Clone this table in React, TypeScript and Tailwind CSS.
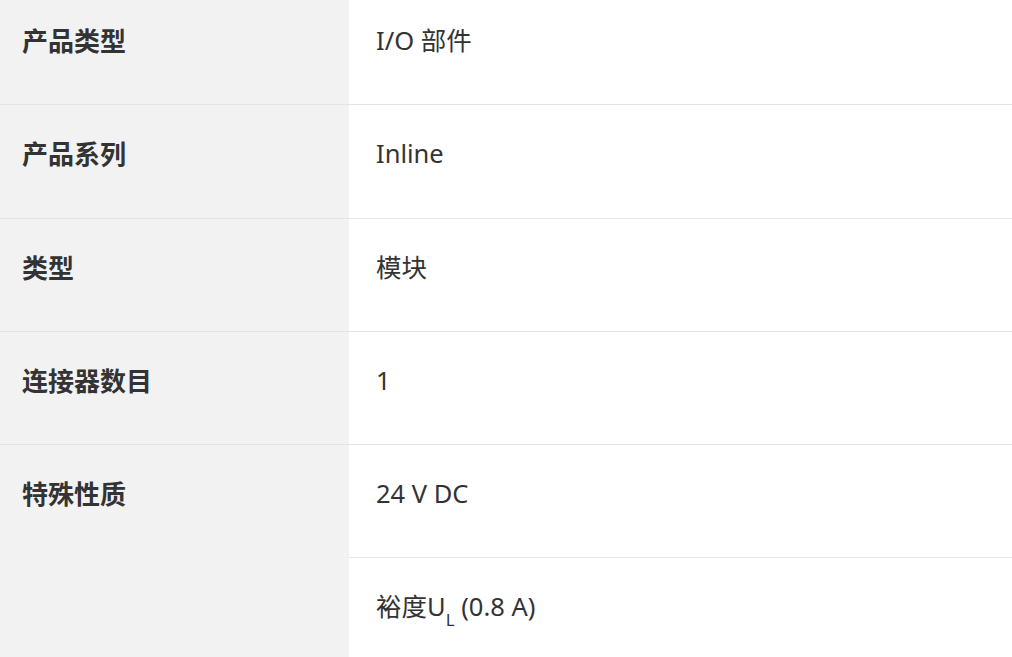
import React from "react";

const font = { fontFamily: '"Noto Sans", "Noto Sans CJK SC", sans-serif' };

function Row({ label, children }: { label: string; children: React.ReactNode }) {
  return (
    <div className="grid grid-cols-[349px_1fr] border-b border-[#e3e3e8]">
      <div className="bg-[#f2f2f2] pl-[22px] pt-[31px] h-[112.33px] text-[26px] leading-[36px] font-bold text-[#333333]">
        {label}
      </div>
      <div className="pl-[27px] pt-[30px] h-[112.33px] text-[25.5px] leading-[36px] text-[#333333]">{children}</div>
    </div>
  );
}

export default function App() {
  return (
    <div className="w-[1012px] h-[657px] overflow-hidden bg-white" style={font}>
      <div className="-mt-[8px]">
        <Row label="产品类型">I/O 部件</Row>
        <Row label="产品系列">Inline</Row>
        <Row label="类型">模块</Row>
        <Row label="连接器数目">1</Row>
        <div className="grid grid-cols-[349px_1fr]">
          <div className="bg-[#f2f2f2] pl-[22px] pt-[31px] text-[26px] leading-[36px] font-bold text-[#333333]">
            特殊性质
          </div>
          <div className="flex flex-col">
            <div className="pl-[27px] pt-[30px] h-[113px] border-b border-[#e3e3e8] text-[25.5px] leading-[36px] text-[#333333]">
              24 V DC
            </div>
            <div className="pl-[27px] pt-[30px] h-[113px] text-[25.5px] leading-[36px] text-[#333333]">
              裕度U<sub className="text-[17px] align-[-5px] leading-none">L</sub> (0.8 A)
            </div>
          </div>
        </div>
      </div>
    </div>
  );
}
